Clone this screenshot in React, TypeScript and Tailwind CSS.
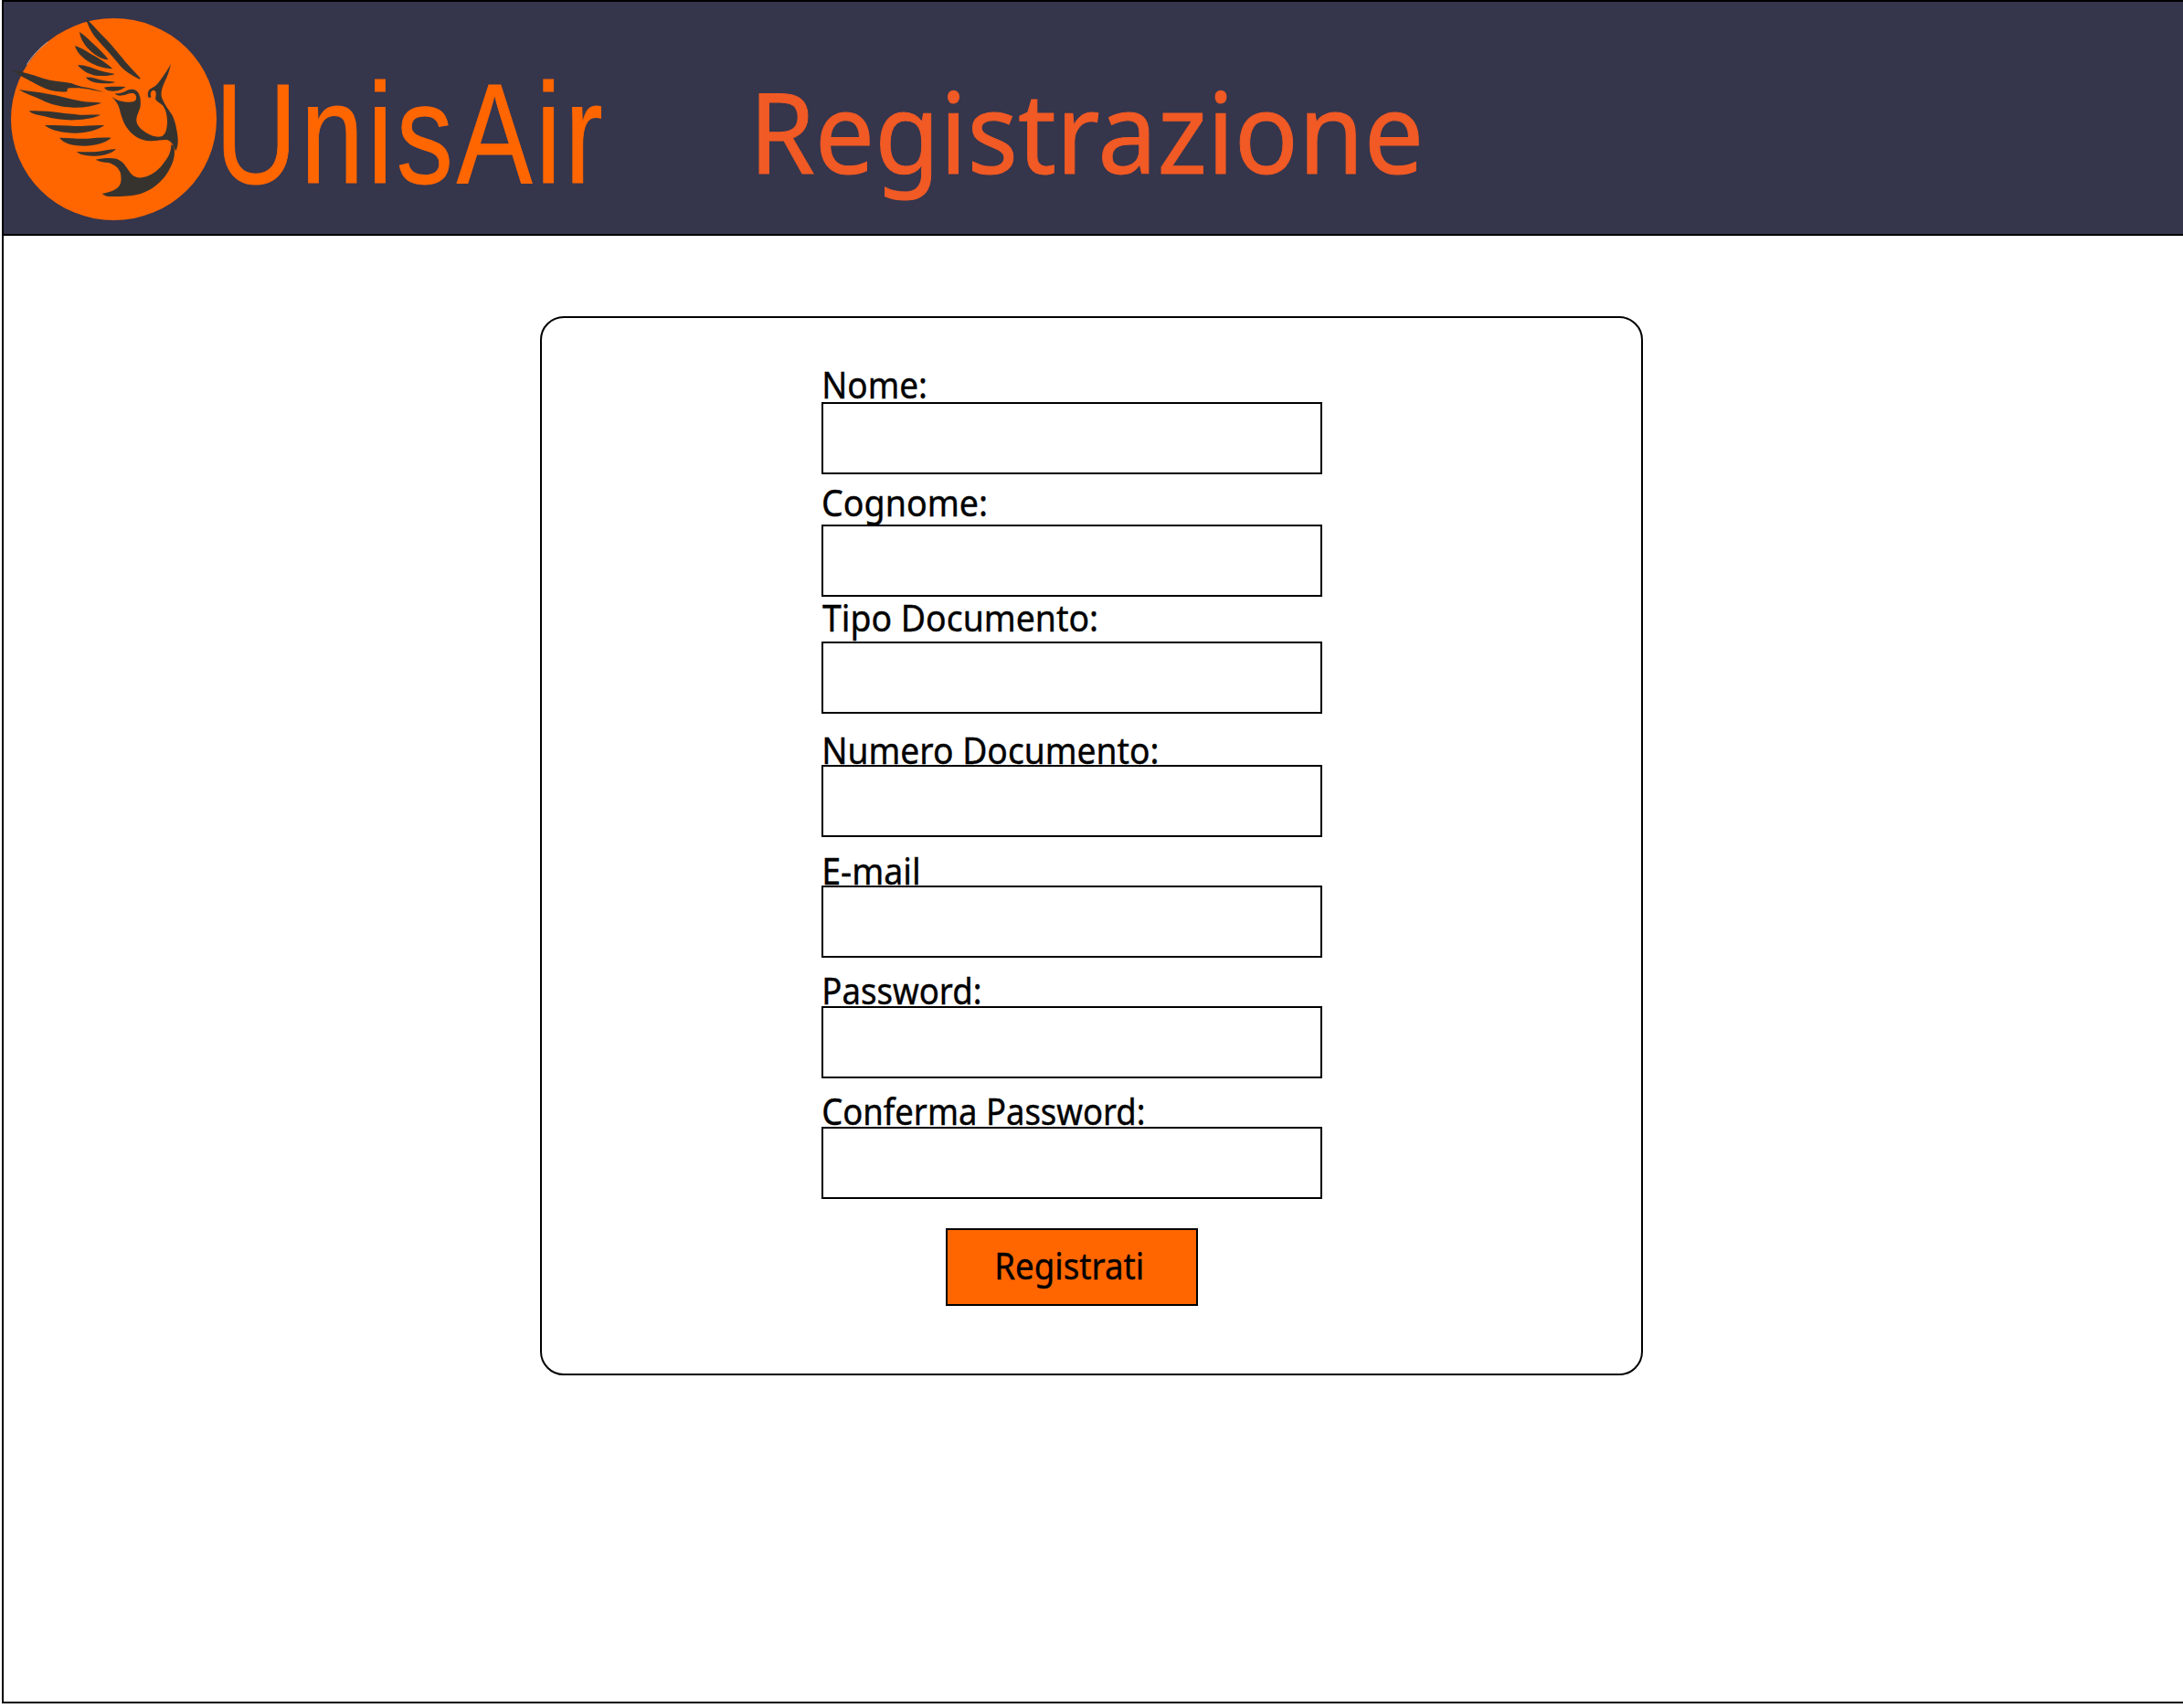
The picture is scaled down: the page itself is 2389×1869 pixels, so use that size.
import { useLayoutEffect, useState } from "react";

type FitProps = {
  text: string;
  font: string;
  /** Width in pixels that the drawn glyphs fill. */
  width: number;
  className: string;
  tracking?: string;
};

/** One line of text, condensed so that its glyphs fill exactly `width`. */
function FitText({ text, font, width, className, tracking = "0px" }: FitProps) {
  const [transform, setTransform] = useState("none");
  useLayoutEffect(() => {
    const ctx = document.createElement("canvas").getContext("2d");
    if (!ctx) return;
    ctx.font = font;
    const m = ctx.measureText(text);
    const left = -m.actualBoundingBoxLeft;
    const extra = parseFloat(tracking) * (text.length - 1);
    const scale = width / (m.actualBoundingBoxRight - left + extra);
    setTransform(`translateX(${-left * scale}px) scaleX(${scale})`);
  }, [text, font, width, tracking]);
  return (
    <span
      className={`block w-max origin-left whitespace-nowrap ${className}`}
      style={{ transform, letterSpacing: tracking }}
    >
      {text}
    </span>
  );
}

function BirdLogo() {
  return (
    <svg viewBox="36 60 675 663" className="h-[221px] w-[225px] shrink-0 overflow-visible" aria-hidden="true">
      <ellipse cx="373.500" cy="391.500" rx="337.500" ry="331.500" fill="#ff6600" />
      <path d="M88 212 Q112 172 156 138" fill="none" stroke="#b9a8a4" strokeWidth="3" />
      <g fill="#36332f">
        <path d="M281 60 C300 76 312 92 330 110 C356 136 376 158 396 184 C418 212 440 234 461 257 L458 260 C432 248 404 230 388 208 C366 180 340 154 318 128 C300 108 290 86 281 60Z" />
        <path d="M261 105 C276 114 288 126 300 138 C320 156 340 174 356 196 C328 194 306 176 288 158 C274 142 264 126 261 105Z" />
        <path d="M246 150 C264 156 280 166 298 177 C324 190 350 208 370 226 C338 226 306 212 284 198 C268 186 252 172 246 150Z" />
        <path d="M255 214 C272 212 290 218 308 225 C330 234 354 238 377 243 C362 250 338 250 314 248 C290 244 270 232 255 214Z" />
        <path d="M282 254 C298 252 314 258 330 262 C346 266 362 268 379 269 C366 276 340 274 320 272 C304 270 290 264 282 254Z" />
        <path d="M342 287 C356 283 384 284 413 285 C402 292 392 299 372 299 C360 299 348 297 342 287Z" />
        <path d="M40 232 C60 230 76 238 94 242 C120 248 140 258 164 263 C190 268 214 268 236 274 C254 282 270 286 284 287 C304 291 322 295 340 302 C318 298 296 293 272 290 C254 289 238 288 222 290 L220 301 C190 304 160 298 132 283 C104 268 72 254 40 232Z" />
        <path d="M62 294 C94 300 124 302 156 308 C196 314 232 326 268 332 C290 336 312 334 334 338 C306 348 274 354 240 353 C204 352 168 344 136 328 C112 316 84 308 62 294Z" />
        <path d="M95 364 C120 364 146 364 172 367 C204 372 232 374 262 377 C286 378 308 376 330 377 C314 386 282 392 246 394 C210 395 176 390 146 382 C126 378 106 376 95 364Z" />
        <path d="M147 411 C180 411 214 412 246 414 C280 414 312 410 343 411 C322 426 286 437 246 437 C208 436 170 430 147 411Z" />
        <path d="M195 452 C228 452 258 457 288 455 C314 452 340 451 365 452 C348 468 312 479 276 479 C244 478 212 474 195 452Z" />
        <path d="M251 498 C272 498 296 500 318 498 C340 496 360 490 381 489 C370 502 344 511 312 512 C288 512 266 510 251 498Z" />
        <path
          fillRule="evenodd"
          d="M377 306 C392 308 404 304 418 296 C434 290 450 294 456 308 C462 320 462 334 461 348 C458 364 448 378 448 394 C448 412 462 424 480 436 C496 446 514 452 530 448 C544 442 548 424 549 402 C549 382 546 362 534 346 C526 338 514 334 510 324 C512 314 516 298 504 296 C494 298 492 310 497 319 L488 321 C482 308 486 296 496 290 C512 284 520 272 530 258 C542 242 552 226 561 210 C556 232 550 252 540 270 C532 288 528 302 530 316 C536 338 552 358 564 376 C574 394 580 420 583 446 C586 466 584 482 577 496 C572 482 566 468 554 461 C538 456 520 464 492 463 C462 462 436 446 420 424 C404 402 398 380 392 356 C388 340 378 328 366 317 C376 322 384 330 400 332 C416 336 438 338 446 328 C450 318 446 308 436 306 C424 304 414 312 402 313 C392 315 382 314 377 306Z"
        />
        <path d="M314 524 C336 519 364 517 382 521 C406 528 416 552 430 570 C442 584 460 586 480 580 C504 572 524 556 540 532 C552 516 562 500 562 474 L571 480 C578 512 566 542 548 570 C528 600 498 624 462 636 C424 646 386 645 358 645 C348 645 340 640 335 636 C356 632 378 626 390 612 C400 600 398 584 396 570 C392 552 376 540 356 534 C342 532 328 532 314 524Z" />
      </g>
    </svg>
  );
}

type Field = { label: string; width: number; indent: string; gap: string; labelHeight: string };

const FIELDS: Field[] = [
  { label: "Nome:", width: 110.5, indent: "pl-[3px]", gap: "mt-0", labelHeight: "h-10" },
  { label: "Cognome:", width: 177.5, indent: "pl-[2px]", gap: "mt-[10px]", labelHeight: "h-[45px]" },
  { label: "Tipo Documento:", width: 299.5, indent: "pl-px", gap: "mt-[2px]", labelHeight: "h-[47px]" },
  { label: "Numero Documento:", width: 364, indent: "pl-[3px]", gap: "mt-[19px]", labelHeight: "h-[37px]" },
  { label: "E-mail", width: 102.5, indent: "pl-[3px]", gap: "mt-4", labelHeight: "h-[37px]" },
  { label: "Password:", width: 170, indent: "pl-[3px]", gap: "mt-[15px]", labelHeight: "h-[38px]" },
  { label: "Conferma Password:", width: 350, indent: "pl-[2px]", gap: "mt-[15px]", labelHeight: "h-[38px]" },
];

const LABEL_FONT = '40px "Noto Sans"';
const LABEL_CLASS = "text-[40px] leading-[41px] [-webkit-text-stroke:0.4px_black]";

export default function App() {
  return (
    <div className="h-[1869px] w-full overflow-hidden bg-white pl-[2px] font-['Noto_Sans',sans-serif] text-black">
      <div className="flex h-[1864px] flex-col border-b-2 border-l-2 border-black">
        <header className="flex h-[258px] shrink-0 items-start border-y-2 border-black bg-[#35354c]">
          <div className="pt-[18px] pl-2">
            <BirdLogo />
          </div>
          <div className="w-[586px] shrink-0 pt-[70px] pl-[8px]">
            <FitText
              text="UnisAir"
              font='156px "Liberation Sans"'
              width={413}
              tracking="5px"
              className="font-['Liberation_Sans',sans-serif] text-[156px] leading-[149px] text-[#ff6600] [-webkit-text-stroke:1px_#ff6600]"
            />
          </div>
          <h1 className="pt-[67px] pl-[7px]">
            <FitText
              text="Registrazione"
              font='123px "Noto Sans"'
              width={723}
              className="text-[123px] leading-[148px] text-[#f15a24] [-webkit-text-stroke:1px_#f15a24]"
            />
          </h1>
        </header>

        <main className="mt-[88px] ml-[587px] h-[1159px] w-[1207px] rounded-[26px] border-2 border-black pt-[52px] pl-[306px]">
          <form className="flex w-[548px] flex-col">
            {FIELDS.map((f) => (
              <label key={f.label} className={`block ${f.gap}`}>
                <span className={`block ${f.labelHeight} ${f.indent}`}>
                  <FitText text={f.label} font={LABEL_FONT} width={f.width} className={LABEL_CLASS} />
                </span>
                <input className="block h-[79px] w-full border-2 border-black bg-white px-3 text-3xl outline-none" />
              </label>
            ))}
            <button
              type="button"
              className="mt-8 ml-[136px] h-[85px] w-[276px] border-2 border-black bg-[#ff6600] pb-[5px] pl-[54px]"
            >
              <FitText text="Registrati" font={LABEL_FONT} width={159} className={LABEL_CLASS} />
            </button>
          </form>
        </main>
      </div>
    </div>
  );
}
